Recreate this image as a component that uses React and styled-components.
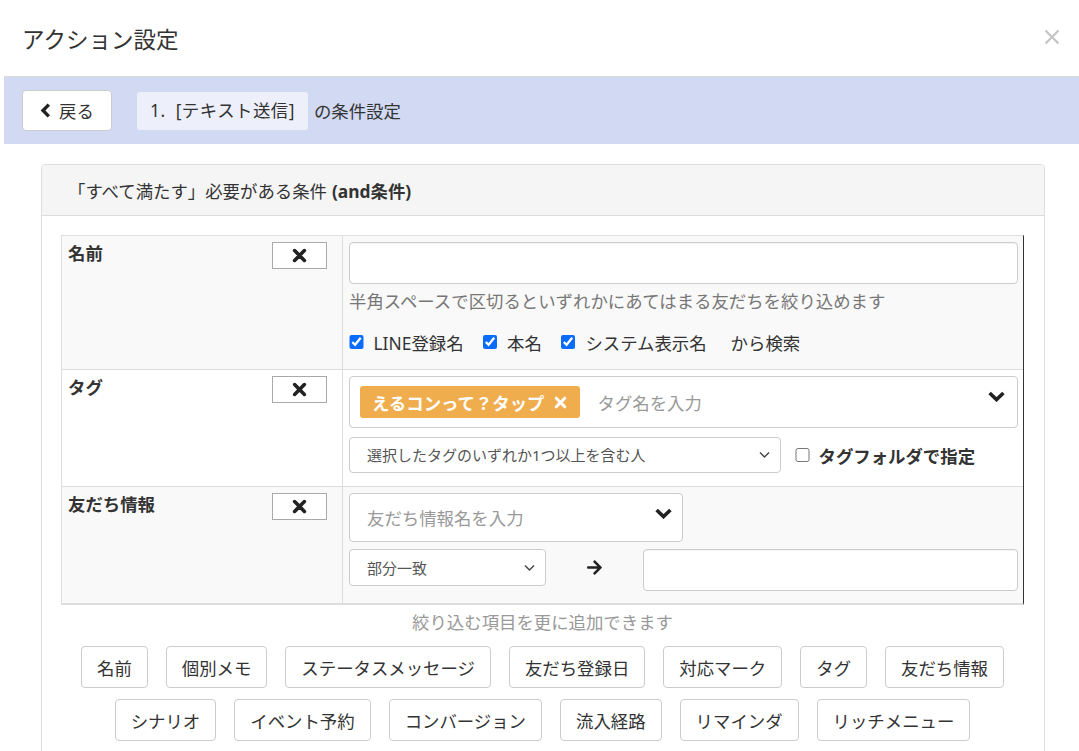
import React from 'react';
import styled, { createGlobalStyle } from 'styled-components';
import { FaArrowRight } from 'react-icons/fa';

const GlobalStyle = createGlobalStyle`
  html, body { margin: 0; padding: 0; background: #fff; }
  body {
    font-family: "Noto Sans", "Noto Sans CJK JP", sans-serif;
    color: #333;
    font-size: 17.4px;
  }
  * { box-sizing: border-box; }
`;

const Modal = styled.div`
  padding-left: 4px;
  width: 1079px;
  overflow: hidden;
`;

const ModalHeader = styled.div`
  height: 76px;
  display: flex;
  justify-content: space-between;
  align-items: flex-start;
  padding: 25px 19px 0 18px;
`;

const Title = styled.h4`
  margin: 0;
  font-size: 22.5px;
  line-height: 30px;
  font-weight: 400;
  color: #333;
`;

const CloseButton = styled.button`
  border: 0;
  background: none;
  padding: 0;
  margin-top: 4px;
  width: 16px;
  height: 16px;
  display: flex;
  cursor: pointer;
`;

const Band = styled.div`
  border-top: 1px solid #dcdcdc;
  background: #d2d9f3;
  height: 68px;
  padding: 0 18px;
  display: flex;
  align-items: center;
`;

const BackButton = styled.button`
  height: 41px;
  width: 90px;
  padding: 0 15px 0 17px;
  background: #fff;
  border: 1px solid #ccc;
  border-radius: 4px;
  display: flex;
  align-items: center;
  gap: 8px;
  font-family: inherit;
  font-size: 17.4px;
  color: #333;
  cursor: pointer;
`;

const Chip = styled.span`
  margin-left: 25px;
  height: 38px;
  padding: 0 13px;
  background: #edf0fa;
  border-radius: 3px;
  display: flex;
  align-items: center;
  line-height: 1;
  white-space: pre;
  letter-spacing: 0.5px;
`;

const ChipSuffix = styled.span`
  margin-left: 6px;
`;

const Panel = styled.div`
  margin: 20px 0 0 37px;
  width: 1004px;
  border: 1px solid #ddd;
  border-radius: 4px;
`;

const PanelHeading = styled.div`
  height: 51px;
  background: #f5f5f5;
  border-bottom: 1px solid #ddd;
  border-radius: 3px 3px 0 0;
  padding-left: 26px;
  display: flex;
  align-items: center;
  b { font-weight: 700; margin-left: 5px; }
`;

const PanelBody = styled.div`
  padding: 19px 20px 20px 19px;
`;

const CondTable = styled.div`
  border-top: 1px solid #ddd;
  border-left: 1px solid #ddd;
  border-right: 1px solid #333;
  border-bottom: 2px solid #ddd;
`;

const CondRow = styled.div`
  display: grid;
  grid-template-columns: 281px 1fr;
  background: ${p => (p.$shade ? '#f9f9f9' : '#fff')};
  border-bottom: ${p => (p.$last ? '0' : '1px solid #ddd')};
`;

const LabelCell = styled.div`
  padding: 6px 15px 6px 6px;
  display: flex;
  justify-content: space-between;
  align-items: flex-start;
  border-right: 1px solid #ddd;
`;

const LabelText = styled.span`
  font-weight: 700;
  line-height: 22px;
`;

const RemoveButton = styled.button`
  width: 55px;
  height: 27px;
  border: 1px solid #aaa;
  background: #fff;
  display: flex;
  align-items: center;
  justify-content: center;
  padding: 0;
  cursor: pointer;
`;

const ContentCell = styled.div`
  padding: 6px 5px ${p => p.$pb}px 6px;
`;

const TextInput = styled.input`
  display: block;
  width: 100%;
  height: 42px;
  border: 1px solid #ccc;
  border-radius: 4px;
  background: #fff;
  padding: 0 17px;
  font-family: inherit;
  font-size: 17.4px;
  color: #333;
  box-shadow: inset 0 1px 1px rgba(0, 0, 0, 0.05);
  &::placeholder { color: #999; }
`;

const HelpText = styled.div`
  margin-top: 4px;
  line-height: 26px;
  color: #777;
`;

const CheckRow = styled.div`
  margin-top: 14px;
  height: 28px;
  display: flex;
  align-items: center;
`;

const CheckLabel = styled.label`
  display: inline-flex;
  align-items: center;
  gap: ${p => p.$gap || 10}px;
  margin-right: ${p => p.$mr || 0}px;
  font-weight: ${p => (p.$bold ? 700 : 400)};
  color: #333;
`;

const Checkbox = styled.input.attrs({ type: 'checkbox' })`
  width: 14.5px;
  height: 14.5px;
  margin: 0;
  accent-color: #0a6cff;
`;

const FromText = styled.span`
  margin-left: 5px;
`;

const ComboBox = styled.div`
  width: ${p => p.$w || '100%'};
  height: ${p => p.$h}px;
  border: 1px solid #ccc;
  border-radius: 4px;
  background: #fff;
  display: flex;
  align-items: center;
  padding: 0 ${p => p.$pr}px 0 ${p => p.$pl}px;
`;

const TagPill = styled.span`
  height: 32px;
  background: #f0ad4e;
  color: #fff;
  font-weight: 700;
  padding: 0 13px 0 12px;
  border-radius: 3px;
  display: flex;
  align-items: center;
  gap: 9px;
`;

const Placeholder = styled.span`
  margin-left: ${p => p.$ml || 0}px;
  color: #999;
  flex: 1;
`;

const ChevronWrap = styled.span`
  align-self: flex-start;
  margin-top: ${p => p.$mt}px;
  display: flex;
`;

const LineRow = styled.div`
  display: flex;
  align-items: ${p => p.$align || 'center'};
  margin-top: ${p => p.$mt}px;
`;

const SelectWrap = styled.div`
  position: relative;
  width: ${p => p.$w}px;
  height: ${p => p.$h}px;
  flex: none;
`;

const Select = styled.select`
  appearance: none;
  -webkit-appearance: none;
  width: 100%;
  height: 100%;
  border: 1px solid #ccc;
  border-radius: 4px;
  background: #fff;
  padding: 0 30px 0 17px;
  font-family: inherit;
  font-size: 15px;
  color: #555;
`;

const SelectArrow = styled.span`
  position: absolute;
  right: 11px;
  top: 50%;
  transform: translateY(-50%);
  pointer-events: none;
  display: flex;
`;

const FolderCheck = styled.div`
  margin-left: 14px;
`;

const ArrowCell = styled.div`
  width: 97px;
  height: 37px;
  flex: none;
  display: flex;
  align-items: center;
  justify-content: center;
  color: #222;
`;

const AddHint = styled.div`
  text-align: center;
  color: #999;
  line-height: 24px;
  margin-top: 5px;
`;

const ButtonRows = styled.div`
  margin-top: 12px;
  display: flex;
  flex-direction: column;
  gap: 11px;
`;

const ButtonRow = styled.div`
  display: flex;
  justify-content: center;
  gap: 18px;
`;

const AddButton = styled.button`
  height: 42px;
  padding: 0 15px;
  border: 1px solid #ccc;
  border-radius: 4px;
  background: #fff;
  font-family: inherit;
  font-size: 17.4px;
  color: #333;
  cursor: pointer;
  white-space: nowrap;
`;

const CloseIcon = () => (
  <svg width="16" height="16" viewBox="0 0 16 16">
    <path d="M1.5 1.5 L14.5 14.5 M14.5 1.5 L1.5 14.5" stroke="#c4c4c4" strokeWidth="2.2" fill="none" />
  </svg>
);

const ChevronLeft = () => (
  <svg width="11" height="15" viewBox="0 0 11 15">
    <path d="M8.8 1.6 L3 7.5 L8.8 13.4" stroke="#222" strokeWidth="3.4" fill="none" strokeLinejoin="miter" />
  </svg>
);

const ChevronDown = () => (
  <svg width="17" height="11" viewBox="0 0 17 11">
    <path d="M1.6 2 L8.5 8.6 L15.4 2" stroke="#222" strokeWidth="3.6" fill="none" strokeLinejoin="miter" />
  </svg>
);

const ThinChevron = () => (
  <svg width="11" height="7" viewBox="0 0 11 7">
    <path d="M1 1 L5.5 5.5 L10 1" stroke="#444" strokeWidth="1.4" fill="none" />
  </svg>
);

const TimesIcon = ({ color = '#222', size = 15 }) => (
  <svg width={size} height={size} viewBox="0 0 15 15">
    <path d="M2.6 2.6 L12.4 12.4 M12.4 2.6 L2.6 12.4" stroke={color} strokeWidth="3.6" strokeLinecap="round" fill="none" />
  </svg>
);

const addButtonsRow1 = ['名前', '個別メモ', 'ステータスメッセージ', '友だち登録日', '対応マーク', 'タグ', '友だち情報'];
const addButtonsRow2 = ['シナリオ', 'イベント予約', 'コンバージョン', '流入経路', 'リマインダ', 'リッチメニュー'];

export default function App() {
  return (
    <>
      <GlobalStyle />
      <Modal>
        <ModalHeader>
          <Title>アクション設定</Title>
          <CloseButton aria-label="close"><CloseIcon /></CloseButton>
        </ModalHeader>

        <Band>
          <BackButton><ChevronLeft />戻る</BackButton>
          <Chip>{'1.  [テキスト送信]'}</Chip>
          <ChipSuffix>の条件設定</ChipSuffix>
        </Band>

        <Panel>
          <PanelHeading>
            「すべて満たす」必要がある条件<b>(and条件)</b>
          </PanelHeading>
          <PanelBody>
            <CondTable>
              <CondRow $shade>
                <LabelCell>
                  <LabelText>名前</LabelText>
                  <RemoveButton><TimesIcon /></RemoveButton>
                </LabelCell>
                <ContentCell $pb={13}>
                  <TextInput type="text" />
                  <HelpText>半角スペースで区切るといずれかにあてはまる友だちを絞り込めます</HelpText>
                  <CheckRow>
                    <CheckLabel $mr={19}><Checkbox defaultChecked />LINE登録名</CheckLabel>
                    <CheckLabel $mr={19}><Checkbox defaultChecked />本名</CheckLabel>
                    <CheckLabel $mr={19}><Checkbox defaultChecked />システム表示名</CheckLabel>
                    <FromText>から検索</FromText>
                  </CheckRow>
                </ContentCell>
              </CondRow>

              <CondRow>
                <LabelCell>
                  <LabelText>タグ</LabelText>
                  <RemoveButton><TimesIcon /></RemoveButton>
                </LabelCell>
                <ContentCell $pb={13}>
                  <ComboBox $h={52} $pl={10} $pr={12}>
                    <TagPill>えるコンって？タップ<TimesIcon color="#fff" size={13} /></TagPill>
                    <Placeholder $ml={18}>タグ名を入力</Placeholder>
                    <ChevronWrap $mt={14}><ChevronDown /></ChevronWrap>
                  </ComboBox>
                  <LineRow $mt={9}>
                    <SelectWrap $w={432} $h={36}>
                      <Select defaultValue="any">
                        <option value="any">選択したタグのいずれか1つ以上を含む人</option>
                      </Select>
                      <SelectArrow><ThinChevron /></SelectArrow>
                    </SelectWrap>
                    <FolderCheck>
                      <CheckLabel $bold $gap={9}><Checkbox />タグフォルダで指定</CheckLabel>
                    </FolderCheck>
                  </LineRow>
                </ContentCell>
              </CondRow>

              <CondRow $shade $last>
                <LabelCell>
                  <LabelText>友だち情報</LabelText>
                  <RemoveButton><TimesIcon /></RemoveButton>
                </LabelCell>
                <ContentCell $pb={12}>
                  <ComboBox $w="334px" $h={49} $pl={17} $pr={10}>
                    <Placeholder>友だち情報名を入力</Placeholder>
                    <ChevronWrap $mt={14}><ChevronDown /></ChevronWrap>
                  </ComboBox>
                  <LineRow $mt={7} $align="flex-start">
                    <SelectWrap $w={197} $h={37}>
                      <Select defaultValue="partial">
                        <option value="partial">部分一致</option>
                      </Select>
                      <SelectArrow><ThinChevron /></SelectArrow>
                    </SelectWrap>
                    <ArrowCell><FaArrowRight size={17} /></ArrowCell>
                    <TextInput type="text" />
                  </LineRow>
                </ContentCell>
              </CondRow>
            </CondTable>

            <AddHint>絞り込む項目を更に追加できます</AddHint>
            <ButtonRows>
              <ButtonRow>
                {addButtonsRow1.map(t => <AddButton key={t}>{t}</AddButton>)}
              </ButtonRow>
              <ButtonRow>
                {addButtonsRow2.map(t => <AddButton key={t}>{t}</AddButton>)}
              </ButtonRow>
            </ButtonRows>
          </PanelBody>
        </Panel>
      </Modal>
    </>
  );
}
